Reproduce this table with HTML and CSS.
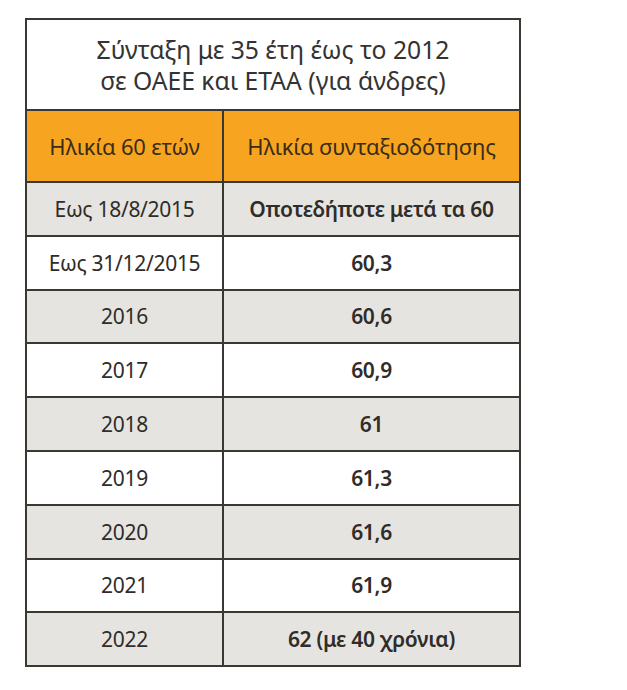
FILE: index.html
```html
<!DOCTYPE html>
<html lang="el">
<head>
<meta charset="utf-8">
<title>Σύνταξη με 35 έτη</title>
<link rel="stylesheet" href="styles.css">
</head>
<body>
<table class="pension">
  <colgroup><col class="col1"><col class="col2"></colgroup>
  <thead>
    <tr><th colspan="2" class="title">Σύνταξη με 35 έτη έως το 2012<br>σε ΟΑΕΕ και ΕΤΑΑ (για άνδρες)</th></tr>
    <tr class="head"><th>Ηλικία 60 ετών</th><th>Ηλικία συνταξιοδότησης</th></tr>
  </thead>
  <tbody>
    <tr class="grey"><td>Εως 18/8/2015</td><td class="val">Οποτεδήποτε μετά τα 60</td></tr>
    <tr><td>Εως 31/12/2015</td><td class="val">60,3</td></tr>
    <tr class="grey"><td>2016</td><td class="val">60,6</td></tr>
    <tr><td>2017</td><td class="val">60,9</td></tr>
    <tr class="grey"><td>2018</td><td class="val">61</td></tr>
    <tr><td>2019</td><td class="val">61,3</td></tr>
    <tr class="grey"><td>2020</td><td class="val">61,6</td></tr>
    <tr><td>2021</td><td class="val">61,9</td></tr>
    <tr class="grey"><td>2022</td><td class="val">62 (με 40 χρόνια)</td></tr>
  </tbody>
</table>
</body>
</html>
```
FILE: styles.css
```css
html, body { margin: 0; padding: 0; background: #ffffff; }
body { padding: 18px 0 0 25px; font-family: "Noto Sans", "Open Sans", sans-serif; color: #2f2c29; }
.pension { border-collapse: collapse; width: 494px; table-layout: fixed; }
.col1 { width: 197px; }
.col2 { width: 297px; }
.pension th, .pension td { border: 2px solid #3b3733; text-align: center; padding: 0; }
.title { height: 89px; font-weight: 400; font-size: 24.7px; line-height: 31px; letter-spacing: 0; color: #333; background: #fff; }
.head th { height: 70px; background: #f7a521; font-weight: 400; font-size: 22px; letter-spacing: -0.2px; color: #3a2c18; }
td { height: 51.8px; font-size: 21px; letter-spacing: -0.3px; }
td.val { font-weight: 600; }
.grey td { background: #e6e4e0; }
```
